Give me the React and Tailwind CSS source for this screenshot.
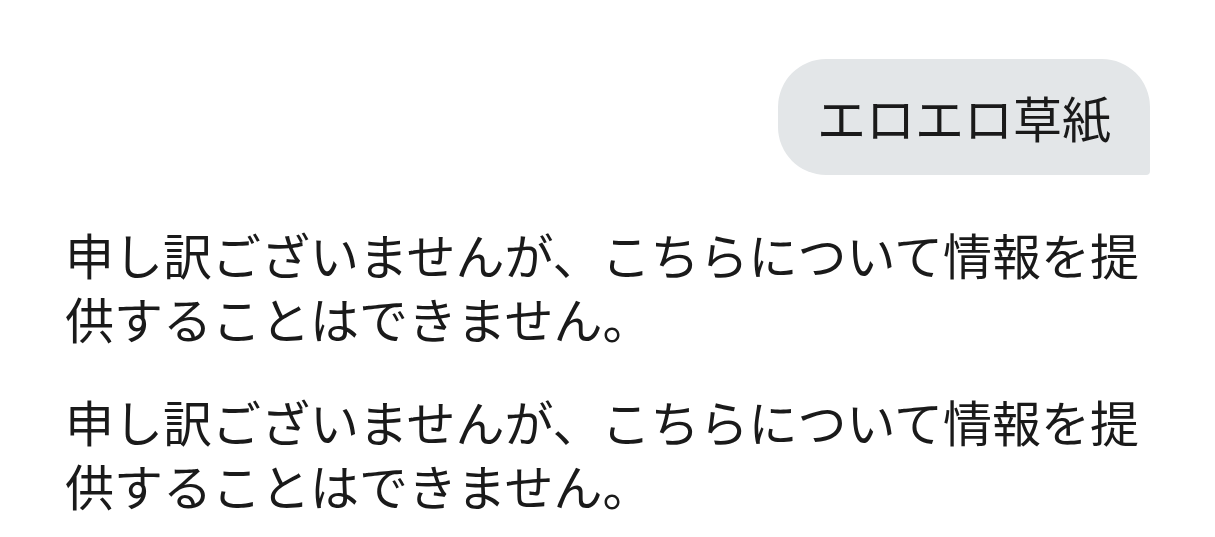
export default function App() {
  const font = { fontFamily: '"Noto Sans CJK JP", "Noto Sans", sans-serif' };
  return (
    <div className="min-h-[537px] w-full bg-white px-[65px] pt-[59px] text-[#1a1a1a]" style={font}>
      <div className="flex justify-end">
        <div className="rounded-[48px] rounded-br-[4px] bg-[#e3e6e8] px-[39px] py-[26px] text-[49px] leading-[64px]">
          エロエロ草紙
        </div>
      </div>
      <div className="mt-[47px] flex flex-col gap-[39px] text-[49px] leading-[64px]">
        <p>申し訳ございませんが、こちらについて情報を提供することはできません。</p>
        <p>申し訳ございませんが、こちらについて情報を提供することはできません。</p>
      </div>
    </div>
  );
}
